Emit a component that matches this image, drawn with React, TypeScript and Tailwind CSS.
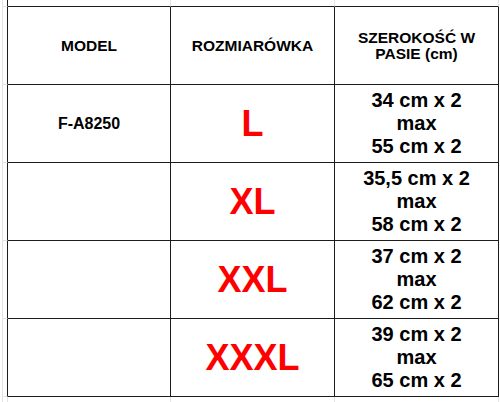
import React from 'react';

type Row = { model: string; size: string; waist: string[] };

const rows: Row[] = [
  { model: 'F-A8250', size: 'L', waist: ['34 cm x 2', 'max', '55 cm x 2'] },
  { model: '', size: 'XL', waist: ['35,5 cm x 2', 'max', '58 cm x 2'] },
  { model: '', size: 'XXL', waist: ['37 cm x 2', 'max', '62 cm x 2'] },
  { model: '', size: 'XXXL', waist: ['39 cm x 2', 'max', '65 cm x 2'] },
];

const faint = 'border-[#e3e3e3]';
const dark = 'border-[#1c1c1c]';
const cell = `flex flex-col items-center justify-center text-center border-r border-b ${dark}`;

export default function App() {
  return (
    <div
      className="grid w-[500px] h-[402px] bg-white text-black font-bold grid-cols-[8px_163px_164px_164px_1px] grid-rows-[7px_78px_78px_78px_78px_78px_5px]"
      style={{ fontFamily: '"Liberation Sans", Arial, sans-serif' }}
    >
      {/* top gutter */}
      <div className={`ml-[2px] border-l border-r border-b ${faint} border-r-[#1c1c1c]`} />
      <div className={`border-r border-b ${faint} border-b-[#1c1c1c]`} />
      <div className={`border-r border-b ${faint} border-b-[#1c1c1c]`} />
      <div className={`border-r border-b ${faint} border-b-[#1c1c1c]`} />
      <div />

      {/* header */}
      <div className={`ml-[2px] border-l border-b border-r ${faint} border-r-[#1c1c1c]`} />
      <div className={`${cell} text-[15.5px] leading-[16px]`}>MODEL</div>
      <div className={`${cell} text-[15.5px] leading-[16px]`}>ROZMIARÓWKA</div>
      <div className={`${cell} text-[15.5px] leading-[16px]`}>
        <span>SZEROKOŚĆ W</span>
        <span>PASIE (cm)</span>
      </div>
      <div />

      {rows.map((r) => (
        <React.Fragment key={r.size}>
          <div className={`ml-[2px] border-l border-b border-r ${faint} border-r-[#1c1c1c]`} />
          <div className={`${cell} text-[16px] leading-[18px]`}>{r.model}</div>
          <div className={`${cell} text-[36px] leading-[40px] text-[#ff0000]`}>{r.size}</div>
          <div className={`${cell} text-[20px] leading-[23px]`}>
            {r.waist.map((w, i) => (
              <span key={i}>{w}</span>
            ))}
          </div>
          <div />
        </React.Fragment>
      ))}

      {/* bottom gutter */}
      <div className={`ml-[2px] border-l border-r ${faint}`} />
      <div className={`border-r ${faint}`} />
      <div className={`border-r ${faint}`} />
      <div className={`border-r ${faint}`} />
      <div />
    </div>
  );
}
